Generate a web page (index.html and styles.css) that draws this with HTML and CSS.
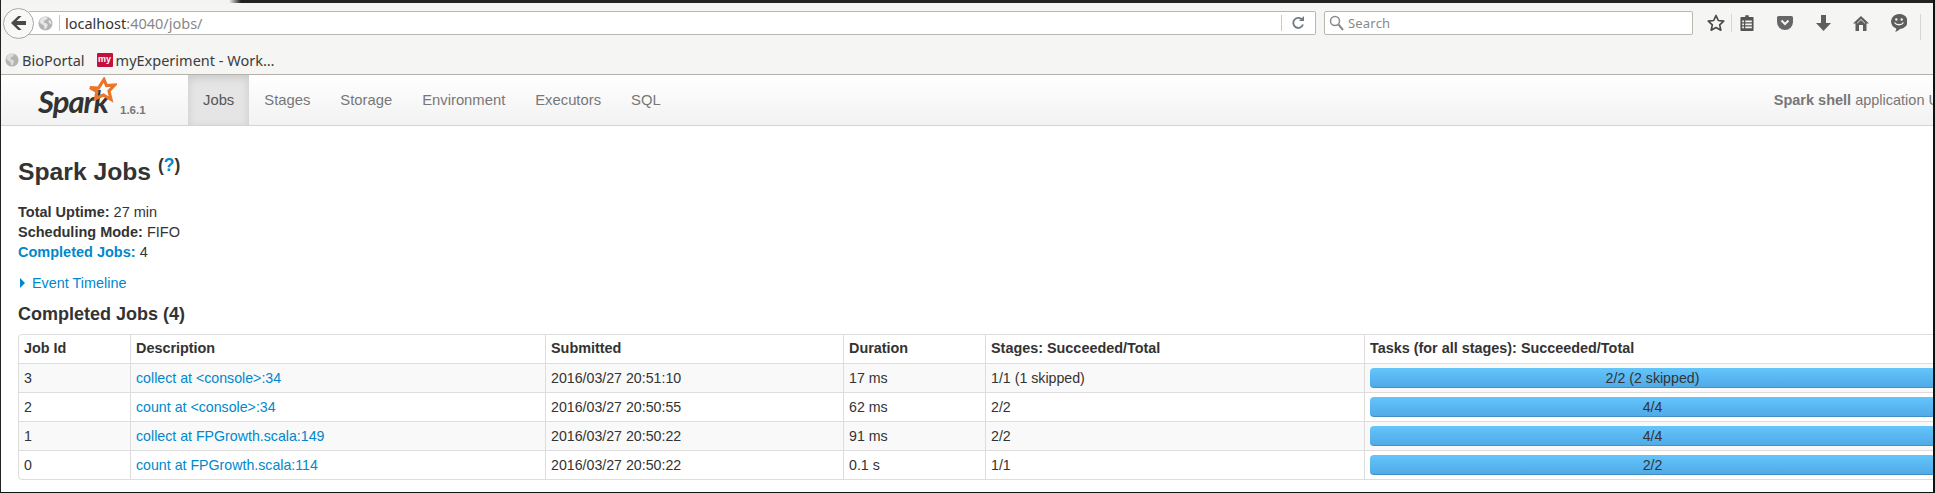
FILE: index.html
```html
<!DOCTYPE html>
<html lang="en">
<head>
<meta charset="utf-8">
<title>Spark shell - Spark Jobs</title>
<link rel="stylesheet" href="styles.css">
</head>
<body>
<div class="frame">
  <div class="titlestrip"></div>
  <header class="chrome">
    <div class="toolbar">
      <button class="back" aria-label="Back">
        <svg width="18" height="16" viewBox="0 0 18 16"><path d="M8.2 1 1 8l7.2 7h3.4L6.6 10H16V6H6.6l5-5z" fill="#4a4a4a"/></svg>
      </button>
      <div class="urlbar">
        <svg class="globe" width="15" height="15" viewBox="0 0 16 16"><circle cx="8" cy="8" r="7.5" fill="#b4b4b4"/><path d="M5 1.5c2-.6 4-.6 5.500.3L9 4 7 4.500 6 7l2.500.5 2 2L9 13l-2 1.500-.5-4L3 8 1.500 6.500C2 4.500 3 2.500 5 1.500zM12 4l2 2 .5 3-2-1-1.500-2z" fill="#e6e6e6"/></svg>
        <span class="urlsep"></span>
        <span class="urltext">localhost<span class="urlmuted">:4040/jobs/</span></span>
        <span class="urlsep reloadsep"></span>
        <svg class="reload" width="14" height="14" viewBox="0 0 14 14"><path d="M11.500 4.200A5 5 0 1 0 12 8.500" fill="none" stroke="#6f7a82" stroke-width="1.800"/><path d="M8 5h5V0z" fill="#6f7a82"/></svg>
      </div>
      <div class="searchbar">
        <svg width="15" height="16" viewBox="0 0 15 16"><circle cx="6" cy="6" r="4.500" fill="none" stroke="#8a8a8a" stroke-width="1.500"/><path d="m9.500 9.500 4.500 5.500" stroke="#8a8a8a" stroke-width="2"/></svg>
        <span class="searchtext">Search</span>
      </div>
      <svg class="star" width="18" height="18" viewBox="0 0 18 18"><path d="m9 1.500 2.300 5 5.400.6-4 3.700 1.100 5.400L9 13.500l-4.800 2.700 1.100-5.400-4-3.700 5.400-.6z" fill="none" stroke="#4a4a4a" stroke-width="1.700" stroke-linejoin="round"/></svg>
      <span class="toolsep"></span>
      <span class="tool toolwide">
        <svg width="14" height="16" viewBox="0 0 16 18"><path d="M6 0h4v2h4.500a1 1 0 0 1 1 1v14a1 1 0 0 1-1 1H1.500a1 1 0 0 1-1-1V3a1 1 0 0 1 1-1H6z" fill="#555"/><path d="M2.500 6h2v2h-2zm3.500 0h7.500v2H6zM2.500 9.500h2v2h-2zm3.500 0h7.500v2H6zM2.500 13h2v2h-2zm3.500 0h7.500v2H6z" fill="#f4f4f2"/></svg>
      </span>
      <div class="tools">
        <span class="tool">
          <svg width="16" height="14" viewBox="0 0 16 14"><path d="M1.500 0h13A1.500 1.500 0 0 1 16 1.500V6a8 8 0 0 1-16 0V1.500A1.500 1.500 0 0 1 1.500 0z" fill="#666"/><path d="m4.500 4.500 3.500 3.500 3.500-3.500" fill="none" stroke="#f4f4f2" stroke-width="2"/></svg>
        </span>
        <span class="tool">
          <svg width="15" height="16" viewBox="0 0 15 16"><path d="M5 0h5v8h5l-7.500 8L0 8h5z" fill="#5e5e5e"/></svg>
        </span>
        <span class="tool">
          <svg width="16" height="15" viewBox="0 0 16 15"><path d="M8 0 16 7.500h-2.500V15H10V9H6v6H2.500V7.500H0z" fill="#5e5e5e"/><path d="M8 3 12 7v.8L8 4 4 7.800V7z" fill="#f4f4f2"/></svg>
        </span>
        <span class="tool">
          <svg width="16" height="18" viewBox="0 0 16 18"><path d="M8 0a8 7.500 0 0 1 1 15c-1.500 1.200-3 2.500-5 2.800 1-1 1.200-2 1.200-3.300A8 7.500 0 0 1 8 0z" fill="#5e5e5e"/><circle cx="5.300" cy="5.500" r="1.200" fill="#f4f4f2"/><circle cx="10.700" cy="5.500" r="1.200" fill="#f4f4f2"/><path d="M3.500 8.500c2 3 7 3 9 0" fill="none" stroke="#f4f4f2" stroke-width="1.300"/></svg>
        </span>
      </div>
      <span class="toolsep lastsep"></span>
    </div>
    <div class="bookmarks">
      <span class="bookmark">
        <svg width="14" height="14" viewBox="0 0 16 16"><circle cx="8" cy="8" r="7.500" fill="#b4b4b4"/><path d="M5 1.500c2-.6 4-.6 5.500.3L9 4 7 4.500 6 7l2.500.5 2 2L9 13l-2 1.500-.5-4L3 8 1.500 6.500C2 4.500 3 2.500 5 1.500z" fill="#dcdcdc"/></svg>
        BioPortal
      </span>
      <span class="bookmark">
        <span class="favicon">my</span>
        myExperiment - Work…
      </span>
    </div>
  </header>

  <div class="page">
    <nav class="navbar">
      <a class="brand" href="#">
        <svg class="brandstar" width="30" height="28" viewBox="0 0 30 28"><path d="m17 2.500 2.500 6 8-.5-5.500 6 2 8.500-7.500-4.500-8 3.500 1.500-7L3 10.500l8.500.5z" fill="none" stroke="#e8772a" stroke-width="3.200" stroke-linejoin="miter"/></svg>
        <span class="brandname">Spark</span>
        <span class="version">1.6.1</span>
      </a>
      <ul class="tabs">
        <li class="tab active"><a href="#">Jobs</a></li>
        <li class="tab"><a href="#">Stages</a></li>
        <li class="tab"><a href="#">Storage</a></li>
        <li class="tab"><a href="#">Environment</a></li>
        <li class="tab"><a href="#">Executors</a></li>
        <li class="tab"><a href="#">SQL</a></li>
      </ul>
      <p class="navtext"><strong>Spark shell</strong> application UI</p>
    </nav>

    <main class="content">
      <h3 class="title">Spark Jobs <sup class="help">(<a href="#">?</a>)</sup></h3>
      <ul class="summary">
        <li><strong>Total Uptime:</strong> 27 min</li>
        <li><strong>Scheduling Mode:</strong> FIFO</li>
        <li><a href="#"><strong>Completed Jobs:</strong></a> 4</li>
      </ul>
      <a class="timeline" href="#"><span class="arrow"></span>Event Timeline</a>
      <h4 class="subtitle">Completed Jobs (4)</h4>
      <table class="jobs">
        <colgroup>
          <col class="c-id"><col class="c-desc"><col class="c-sub"><col class="c-dur"><col class="c-stage"><col class="c-task">
        </colgroup>
        <thead>
          <tr><th>Job Id</th><th>Description</th><th>Submitted</th><th>Duration</th><th>Stages: Succeeded/Total</th><th>Tasks (for all stages): Succeeded/Total</th></tr>
        </thead>
        <tbody>
          <tr><td>3</td><td><a href="#">collect at &lt;console&gt;:34</a></td><td>2016/03/27 20:51:10</td><td>17 ms</td><td>1/1 (1 skipped)</td><td><div class="bar">2/2 (2 skipped)</div></td></tr>
          <tr><td>2</td><td><a href="#">count at &lt;console&gt;:34</a></td><td>2016/03/27 20:50:55</td><td>62 ms</td><td>2/2</td><td><div class="bar">4/4</div></td></tr>
          <tr><td>1</td><td><a href="#">collect at FPGrowth.scala:149</a></td><td>2016/03/27 20:50:22</td><td>91 ms</td><td>2/2</td><td><div class="bar">4/4</div></td></tr>
          <tr><td>0</td><td><a href="#">count at FPGrowth.scala:114</a></td><td>2016/03/27 20:50:22</td><td>0.1 s</td><td>1/1</td><td><div class="bar">2/2</div></td></tr>
        </tbody>
      </table>
    </main>
  </div>
</div>
</body>
</html>
```
FILE: styles.css
```css
* { box-sizing: border-box; }
html, body { margin: 0; padding: 0; background: #fff; }
body { font-family: "Liberation Sans", Arial, sans-serif; font-size: 14px; line-height: 20px; color: #333; overflow: hidden; }
a { color: #0088cc; text-decoration: none; }

.frame { width: 1935px; height: 493px; overflow: hidden; border-left: 1px solid #222; border-right: 2px solid #111; border-bottom: 1px solid #111; background: #fff; position: relative; }
.titlestrip { height: 3px; background: linear-gradient(90deg, #f4f4f2 0, #f4f4f2 228px, #222 240px, #222 100%); }

.chrome { height: 72px; background: #f5f5f3; border-bottom: 1px solid #b4b2ab; font-family: "Noto Sans", "Open Sans", sans-serif; }
.toolbar { height: 40px; display: flex; align-items: center; padding-left: 2px; position: relative; }
.back { width: 31px; height: 31px; flex: none; border-radius: 50%; border: 1px solid #aaa9a3; background: #f8f8f6; padding: 0; display: flex; align-items: center; justify-content: center; position: relative; z-index: 1; }
.urlbar { width: 1287px; height: 24px; flex: none; margin-left: -5px; background: #fff; border: 1px solid #b8b7b0; border-left: 0; border-radius: 0 2px 2px 0; display: flex; align-items: center; padding-left: 9px; }
.urlsep { width: 1px; height: 16px; background: #c8c8c4; margin: 0 5px 0 6px; flex: none; }
.urltext { font-size: 14.500px; color: #333; flex: 1; white-space: nowrap; }
.urlmuted { color: #888; }
.reloadsep { margin: 0 9px 0 0; }
.reload { flex: none; margin-right: 10px; }
.searchbar { width: 369px; height: 24px; flex: none; margin-left: 8px; background: #fff; border: 1px solid #b8b7b0; border-radius: 2px; display: flex; align-items: center; padding-left: 4px; gap: 4px; }
.searchtext { font-size: 13px; color: #888; letter-spacing: .2px; }
.star { margin-left: 14px; margin-right: 6px; flex: none; }
.toolsep { width: 1px; height: 18px; background: #d6d6d2; flex: none; }
.tool { width: 38px; display: flex; justify-content: center; align-items: center; flex: none; }
.toolwide { width: 30px; margin-right: 4px; }
.tools { display: flex; }
.lastsep { height: 26px; margin-left: 2px; margin-top: 8px; }

.bookmarks { height: 31px; display: flex; align-items: center; padding: 3px 0 0 4px; gap: 12px; font-size: 14.500px; color: #3c3c3c; }
.bookmark { display: flex; align-items: center; gap: 3px; white-space: nowrap; }
.favicon { width: 16px; height: 14px; background: #c4103c; color: #fff; font: bold 9px/13px "Liberation Sans", sans-serif; text-align: center; border-radius: 1px; }

.page { width: 1957px; }
.navbar { height: 51px; display: flex; align-items: stretch; background: linear-gradient(#fff, #f2f2f2); border-bottom: 1px solid #d4d4d4; }
.brand { width: 187px; flex: none; position: relative; display: flex; align-items: flex-end; padding: 0 0 6px 37px; color: #333; }
.brandname { font: italic 700 31px/36px "Lato", "Open Sans", sans-serif; color: #333; letter-spacing: -1px; }
.brandstar { position: absolute; left: 86px; top: 2px; }
.version { font-size: 11.500px; font-weight: bold; color: #777; line-height: 16px; margin: 0 0 1px 12px; }
.tabs { display: flex; list-style: none; margin: 0; padding: 0; }
.tab { display: flex; }
.tab a { padding: 0 15px; font-size: 14.800px; line-height: 50px; color: #777; }
.tab.active a { background: #e5e5e5; color: #555; box-shadow: inset 0 3px 8px rgba(0,0,0,.125); }
.navtext { margin: 0 0 0 auto; padding-right: 15px; line-height: 50px; color: #777; font-size: 14.500px; white-space: nowrap; }

.content { padding: 26px 17px 0; }
.title { margin: 0; font-size: 24.700px; line-height: 40px; font-weight: bold; color: #333; }
.help { font-size: 17.500px; line-height: 0; vertical-align: 9px; }
.help a { color: #0088cc; }
.summary { list-style: none; margin: 10px 0; padding: 0; font-size: 14.500px; }
.timeline { display: flex; align-items: center; height: 20px; margin-top: 11px; font-size: 14.400px; }
.arrow { width: 0; height: 0; border-left: 5px solid #0088cc; border-top: 5px solid transparent; border-bottom: 5px solid transparent; margin: 0 7px 0 2px; }
.subtitle { margin: 11px 0 10px; font-size: 18px; line-height: 20px; font-weight: bold; color: #333; }

.jobs { width: 1923px; table-layout: fixed; border-collapse: separate; border-spacing: 0; border: 1px solid #ddd; border-radius: 4px; font-size: 14.200px; }
.c-id { width: 111px; }
.c-desc { width: 415px; }
.c-sub { width: 298px; }
.c-dur { width: 142px; }
.c-stage { width: 379px; }
.jobs th, .jobs td { padding: 4px 5px; line-height: 20px; text-align: left; vertical-align: top; border-left: 1px solid #ddd; border-top: 1px solid #ddd; white-space: nowrap; }
.jobs th { font-weight: bold; font-size: 14.400px; padding: 3px 5px 5px; }
.jobs thead th { border-top: 0; }
.jobs th:first-child, .jobs td:first-child { border-left: 0; }
.jobs tbody tr:nth-child(odd) td { background: #f9f9f9; }
.bar { height: 20px; border-radius: 4px; text-align: center; color: #333; background: linear-gradient(#64c5fb, #4fa9e6); box-shadow: inset 0 -1px 0 rgba(0,0,0,.15); }
```
